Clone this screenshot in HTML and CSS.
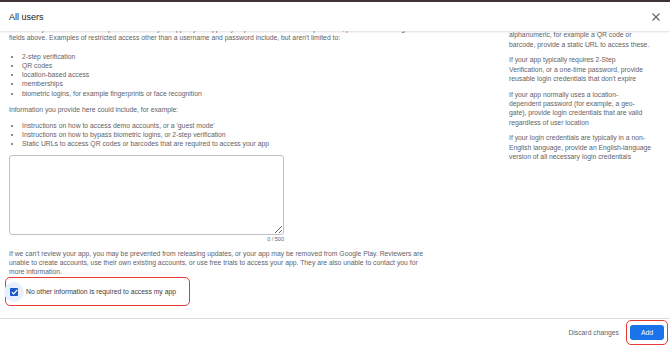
FILE: index.html
```html
<!DOCTYPE html>
<html lang="en">

<head>
    <meta charset="UTF-8">
    <meta name="viewport" content="width=device-width, initial-scale=1.0">
    <title>All users</title>
    <link rel="stylesheet" href="styles.css">
</head>

<body>
    <div class="dialog">
        <!-- Header -->
        <header class="dialog-header">
            <h1>All users</h1>
            <button class="close-btn" aria-label="Close">
                <svg width="8" height="8" viewBox="0 0 8 8">
                    <path d="M0.5 0.5 L7.5 7.5 M7.5 0.5 L0.5 7.5" stroke="#5f6368" stroke-width="1.1" fill="none"/>
                </svg>
            </button>
        </header>

        <!-- Scrolled content -->
        <div class="dialog-body">
            <div class="main-col">
                <p class="intro">Provide any other information required to access your app. If your app only requires a username and password, provide these using the<br>fields above. Examples of restricted access other than a username and password include, but aren't limited to:</p>
                <ul>
                    <li>2-step verification</li>
                    <li>QR codes</li>
                    <li>location-based access</li>
                    <li>memberships</li>
                    <li>biometric logins, for example fingerprints or face recognition</li>
                </ul>
                <p>Information you provide here could include, for example:</p>
                <ul>
                    <li>Instructions on how to access demo accounts, or a 'guest mode'</li>
                    <li>Instructions on how to bypass biometric logins, or 2-step verification</li>
                    <li>Static URLs to access QR codes or barcodes that are required to access your app</li>
                </ul>

                <div class="field">
                    <textarea class="field-input"></textarea>
                    <div class="counter">0 / 500</div>
                </div>

                <p class="warning">If we can't review your app, you may be prevented from releasing updates, or your app may be removed from Google Play. Reviewers are unable to create accounts, use their own existing accounts, or use free trials to access your app. They are also unable to contact you for<br>more information.</p>

                <label class="check-row highlight">
                    <span class="check-halo">
                        <span class="check-box">
                            <svg width="7" height="6" viewBox="0 0 7 6">
                                <path d="M0.8 3.1 L2.6 4.9 L6.2 1" stroke="#fff" stroke-width="1.2" fill="none"/>
                            </svg>
                        </span>
                    </span>
                    <span>No other information is required to access my app</span>
                </label>
            </div>

            <aside class="side-col">
                <p>If your login credentials aren't<br>alphanumeric, for example a QR code or barcode, provide a static URL to access these.</p>
                <p>If your app typically requires 2-Step Verification, or a one-time password, provide reusable login credentials that don't expire</p>
                <p>If your app normally uses a location-<br>dependent password (for example, a geo-<br>gate), provide login credentials that are valid regardless of user location</p>
                <p>If your login credentials are typically in a non-English language, provide an English-language version of all necessary login credentials</p>
            </aside>
        </div>

        <!-- Footer -->
        <footer class="dialog-footer">
            <button class="text-btn">Discard changes</button>
            <span class="highlight btn-wrap"><button class="primary-btn">Add</button></span>
        </footer>
    </div>
</body>

</html>
```

FILE: styles.css
```css
/* General Styling */
body {
    margin: 0;
    font-family: 'Liberation Sans', Arial, sans-serif;
    color: #5f6368;
    background: #fff;
}

.dialog {
    height: 346px;
    display: flex;
    flex-direction: column;
    border-top: 2px solid #3f3434;
    box-sizing: border-box;
    overflow: hidden;
}

/* Header */
.dialog-header {
    height: 29px;
    flex: none;
    display: flex;
    align-items: center;
    justify-content: space-between;
    padding: 0 10px 0 9px;
    background: #fff;
    box-shadow: 0 1px 2px rgba(0, 0, 0, 0.12);
    position: relative;
    z-index: 1;
}

.dialog-header h1 {
    margin: 0;
    font-size: 9px;
    font-weight: 400;
    color: #202124;
}

.close-btn {
    border: none;
    background: none;
    padding: 0;
    display: flex;
}

/* Body */
.dialog-body {
    flex: 1;
    overflow: hidden;
    display: flex;
    font-size: 6.8px;
    line-height: 9.3px;
}

.main-col {
    width: 432px;
    flex: none;
    padding-left: 9px;
    box-sizing: border-box;
    margin-top: -7px;
}

.main-col p {
    margin: 0 0 7px;
}

.main-col .intro {
    margin-bottom: 9px;
}

.main-col ul {
    margin: 0 0 6.5px;
    padding-left: 13px;
}

.side-col {
    width: 143px;
    flex: none;
    margin-left: 77px;
    margin-top: -10px;
}

.side-col p {
    margin: 0 0 6.5px;
}

/* Text field */
.field {
    width: 275px;
    margin-top: 4px;
}

.field-input {
    display: block;
    width: 100%;
    height: 80px;
    box-sizing: border-box;
    border: 1px solid #bdc1c6;
    border-radius: 3px;
    resize: vertical;
    margin: 0;
}

.counter {
    text-align: right;
    font-size: 5.5px;
    margin-top: 0;
}

.main-col .warning {
    margin: 4px 0 1px;
}

/* Checkbox */
.check-row {
    display: flex;
    align-items: center;
    gap: 2px;
    width: 183px;
    height: 27px;
    margin-left: -4px;
    color: #3c4043;
}

.highlight {
    border: 1.5px solid #e53935;
    border-radius: 5px;
}

.check-halo {
    width: 20px;
    height: 20px;
    border-radius: 50%;
    background: #e8f0fe;
    display: flex;
    align-items: center;
    justify-content: center;
    margin-left: -2px;
}

.check-box {
    width: 8px;
    height: 8px;
    background: #1a57c8;
    border-radius: 1px;
    display: flex;
    align-items: center;
    justify-content: center;
}

/* Footer */
.dialog-footer {
    flex: none;
    height: 27px;
    border-top: 1px solid #dadce0;
    display: flex;
    align-items: center;
    justify-content: flex-end;
    padding: 0 2px 0 0;
    gap: 3px;
}

.text-btn {
    border: none;
    background: none;
    font-family: inherit;
    font-size: 6.8px;
    color: #5f6368;
    padding: 0 4px;
}

.btn-wrap {
    padding: 4px 3px;
    display: flex;
}

.primary-btn {
    border: none;
    background: #1a73e8;
    color: #fff;
    font-family: inherit;
    font-size: 6.8px;
    font-weight: 500;
    width: 34px;
    height: 15px;
    border-radius: 3px;
    padding: 0;
}
```
